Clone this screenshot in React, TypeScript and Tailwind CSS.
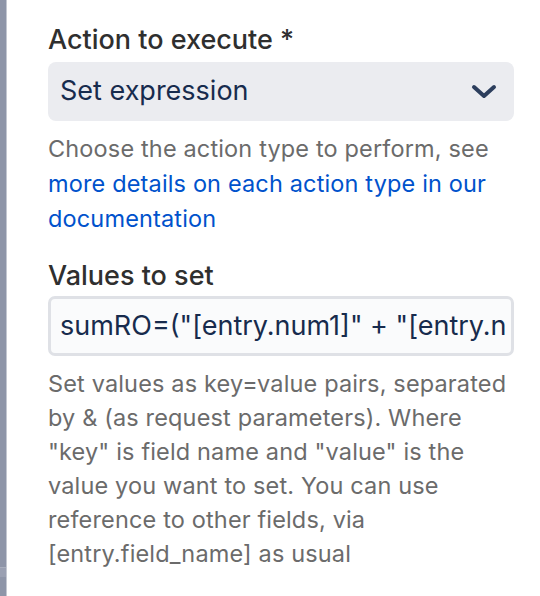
import React from 'react';

// Jira-style automation action form, rendered at 2x
const FONT = { fontFamily: 'Inter, "Liberation Sans", sans-serif' };

function Chevron() {
  return (
    <svg width="26" height="16" viewBox="0 0 26 16" fill="none">
      <path d="M3 3 L13 12 L23 3" stroke="#2c3e5d" strokeWidth="4" strokeLinecap="round" strokeLinejoin="round" />
    </svg>
  );
}

export default function App() {
  return (
    <div className="w-[540px] h-[596px] flex bg-white overflow-hidden" style={FONT}>
      <div className="w-[7px] flex-shrink-0 flex flex-col bg-[#8e95a8] border-r border-[#c3c7d1]">
        <div className="h-[567px]" />
        <div className="h-[10px] bg-[#9aa0b2] border-t border-[#a9aebd]" />
      </div>

      <div className="flex-1 min-w-0 pl-[41px] pr-[26px] pt-[24px]">
        <label className="block text-[27px] leading-[32px] font-medium text-[#2f2f2f]">
          Action to execute *
        </label>
        <div className="mt-[6px] h-[59px] rounded-[8px] bg-[#ebecf0] flex items-center justify-between pl-[12px] pr-[17px]">
          <span className="text-[27px] text-[#172b4d]">Set expression</span>
          <Chevron />
        </div>
        <p className="mt-[10px] text-[23.5px] leading-[35px] tracking-[0.15px] text-[#6b6b6b]">
          Choose the action type to perform, see{' '}
          <a className="text-[#0052cc]">more details on each action type in our documentation</a>
        </p>

        <label className="block mt-[24px] text-[27px] leading-[32px] font-medium text-[#2f2f2f]">
          Values to set
        </label>
        <div className="mt-[4px] h-[60px] rounded-[7px] bg-[#fafbfc] border-[3px] border-[#dfe1e6] flex items-center pl-[9px] pr-[6px]">
          <div className="flex-1 min-w-0 overflow-hidden">
            <span className="text-[27px] text-[#172b4d] whitespace-nowrap">
              sumRO=("[entry.num1]" + "[entry.num2]")
            </span>
          </div>
        </div>
        <p className="mt-[11px] text-[23.5px] leading-[34px] tracking-[0.15px] text-[#6b6b6b]">
          Set values as key=value pairs, separated by &amp; (as request parameters). Where "key" is field name and "value" is the value you want to set. You can use reference to other fields, via [entry.field_name] as usual
        </p>
      </div>
    </div>
  );
}
